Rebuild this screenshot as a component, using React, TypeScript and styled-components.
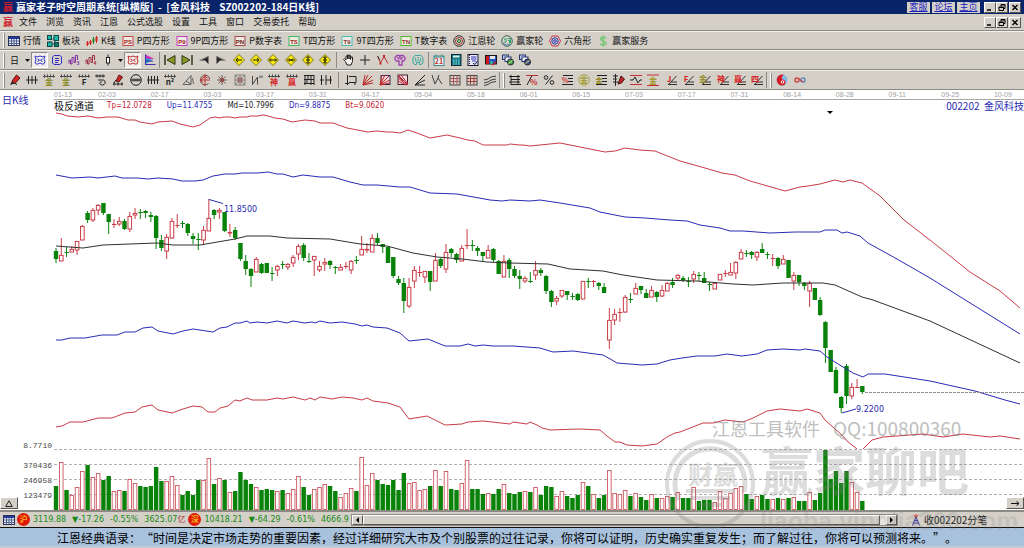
import React from "react";
import styled, { createGlobalStyle, css } from "styled-components";

const FACE = "#d4d0c8";
const GREEN = "#088208";
const RED = "#c83c46";
const BLUE = "#2a2ab4";
const CJK = '"Noto Sans CJK SC", sans-serif';

const GlobalStyle = createGlobalStyle`
  * { box-sizing: border-box; }
  body { margin: 0; background: #fff; font-family: ${CJK}; font-size: 9px; color: #111; }
  button { font: inherit; color: inherit; padding: 0; margin: 0; border: 0; background: none; }
  svg { display: block; }
`;

const Page = styled.div`
  display: flex;
  flex-direction: column;
  overflow: hidden;
`;

/* ---------- window chrome ---------- */

const TitleBar = styled.header`
  display: flex;
  align-items: center;
  height: 14px;
  padding: 0 3px 0 3px;
  gap: 2px;
  background: #0a246a;
  color: #fff;
  font-size: 10px;
  font-weight: 700;
  line-height: 14px;
  white-space: pre;
`;

const Brand = styled.span`
  color: #d01c2c;
  font-size: 10px;
  font-weight: 700;
  line-height: 14px;
  width: 11px;
`;

const TitleLinks = styled.nav`
  display: flex;
  gap: 2px;
  margin-left: auto;
  margin-right: 2px;
`;

const TitleLink = styled.a`
  width: 23px;
  height: 11px;
  background: ${FACE};
  color: #2020c0;
  font-size: 9px;
  font-weight: 400;
  line-height: 10px;
  text-align: center;
  text-decoration: underline;
`;

const WindowButtons = styled.div`
  display: flex;
`;

const raised = css`
  background: ${FACE};
  border: 1px solid;
  border-color: #fff #555 #555 #fff;
`;

const WindowButton = styled.button<{ $apart?: boolean }>`
  ${raised}
  display: grid;
  place-items: center;
  width: 12px;
  height: 11px;
  margin-left: ${(p) => (p.$apart ? 1 : 0)}px;
`;

const MenuBar = styled.nav`
  display: flex;
  align-items: center;
  gap: 9px;
  height: 17px;
  padding: 0 3px;
  background: ${FACE};
  border-bottom: 1px solid #8c8a84;
  line-height: 16px;
`;

const MenuItem = styled.button`
  line-height: 16px;
`;

const MenuBrand = styled(Brand)`
  margin-right: -4px;
`;

const MenuRight = styled.div`
  margin-left: auto;
`;

const Toolbar = styled.div<{ $h: number }>`
  display: flex;
  align-items: center;
  height: ${(p) => p.$h}px;
  background: ${FACE};
  border-top: 1px solid #f4f2ee;
  border-bottom: 1px solid #8c8a84;
`;

const Grip = styled.span`
  width: 2px;
  height: 15px;
  margin: 0 1px 0 3px;
  border-left: 1px solid #fff;
  border-right: 1px solid #8c8a84;
`;

const Separator = styled.span<{ $w: number }>`
  width: ${(p) => p.$w}px;
  height: 16px;
  background: linear-gradient(#8c8a84, #8c8a84) center / 1px 100% no-repeat;
`;

const LabelledTool = styled.button`
  display: flex;
  align-items: center;
  gap: 3px;
  margin: 0 4px 0 2px;
  line-height: 16px;
  white-space: nowrap;
`;

const ToolGroup = styled.div<{ $w: number }>`
  display: flex;
  justify-content: space-between;
  width: ${(p) => p.$w}px;
`;

const Tool = styled.button<{ $on?: boolean; $narrow?: boolean }>`
  display: grid;
  place-items: center;
  width: ${(p) => (p.$narrow ? 8 : 17)}px;
  height: 16px;
  ${(p) =>
    p.$on &&
    css`
      background: #f0eeea;
      border: 1px solid;
      border-color: #8c8a84 #fff #fff #8c8a84;
    `}
`;

/* ---------- chart ---------- */

const ChartHead = styled.div`
  display: grid;
  grid-template-columns: 54px 1fr;
  height: 20px;
`;

const PeriodLabel = styled.div`
  padding-left: 2px;
  color: ${BLUE};
  font-size: 10px;
  line-height: 19px;
`;

const Dates = styled.div`
  display: flex;
  height: 10px;
  border-bottom: 1px solid #a8a8a8;
  color: #a0a0a0;
  font-family: "Liberation Sans", sans-serif;
  font-size: 7px;
  line-height: 10px;
  span { flex: 1; }
  span:first-child { flex: 0 0 44px; }
  span:last-child { flex: 0 0 30px; }
`;

const Legend = styled.div`
  display: flex;
  gap: 15px;
  height: 10px;
  font-family: "DejaVu Sans Condensed", "DejaVu Sans", ${CJK};
  font-size: 8px;
  line-height: 12px;
  white-space: nowrap;
`;

const LegendItem = styled.span<{ $c: string }>`
  color: ${(p) => p.$c};
`;

const LegendName = styled.span`
  font-family: ${CJK};
  font-size: 10px;
  margin-right: -2px;
`;

const StockName = styled.span`
  margin-left: auto;
  color: ${BLUE};
  font-family: ${CJK};
  font-size: 10px;
  white-space: pre;
`;

const Plot = styled.main`
  position: relative;
`;

const PlotArea = styled.div`
  position: relative;
`;

const PlotSvg = styled.svg`
  width: 100%;
  height: auto;
`;

const Watermark = styled.svg`
  position: absolute;
  left: 0;
  top: 0;
  width: 100%;
  height: auto;
  pointer-events: none;
`;

const CornerButton = styled.button<{ $side: "left" | "right" }>`
  ${raised}
  position: absolute;
  bottom: 1px;
  ${(p) => p.$side}: 0;
  display: grid;
  place-items: center;
  width: 18px;
  height: 12px;
`;

/* ---------- status ---------- */

const StatusBar = styled.footer`
  display: flex;
  align-items: center;
  height: 17px;
  padding: 0 3px;
  background: ${FACE};
  border-top: 2px solid #8c8a84;
  color: #178a17;
  font-family: "DejaVu Sans", ${CJK};
  font-size: 8px;
  line-height: 14px;
  white-space: pre;
`;

const Market = styled.span`
  width: 13px;
  height: 13px;
  margin: 0 3px 0 2px;
  border-radius: 50%;
  background: #e01808;
  color: #ffe020;
  font-family: ${CJK};
  font-size: 8px;
  line-height: 12px;
  text-align: center;
`;

const Figures = styled.span`
  display: flex;
  gap: 6px;
`;

const Unit = styled.span`
  color: #b03030;
  margin-right: 1px;
`;

const ScrollTrack = styled.div`
  flex: 1;
  display: flex;
  height: 12px;
  margin: 0 0 0 2px;
  background: #e6e4de;
  border: 1px solid #8c8a84;
`;

const ScrollButton = styled.button`
  ${raised}
  display: grid;
  place-items: center;
  width: 11px;
`;

const ScrollThumb = styled.div`
  ${raised}
  flex: 1;
  margin-right: 6px;
`;

const TickPanel = styled.div`
  display: flex;
  align-items: center;
  gap: 2px;
  width: 123px;
  padding-left: 12px;
  color: #222;
  font-size: 10px;
  font-family: ${CJK};
`;

const Quote = styled.p`
  margin: 0;
  height: 21px;
  padding-left: 57px;
  background: #a8c2de;
  border-top: 1px solid #101010;
  border-bottom: 2px solid #c4ccd6;
  color: #000;
  font-size: 12px;
  line-height: 19px;
  white-space: nowrap;
  text-spacing-trim: space-all;
`;

/* ---------- data ---------- */

type Candle = ["g" | "r", number, number, number, number];

// colour, high, body top, body bottom, low
const candles: Candle[] = [
  ["g", 248, 251, 259, 263], ["r", 238, 255, 261, 261], ["g", 247, 252, 252, 257], ["r", 246, 249, 252, 252],
  ["r", 241, 241, 250, 255], ["r", 225, 226, 240, 240], ["g", 211, 213, 220, 223], ["r", 208, 210, 220, 222],
  ["r", 204, 205, 210, 215], ["g", 203, 203, 213, 215], ["g", 214, 214, 222, 234], ["r", 219, 224, 224, 228],
  ["r", 217, 221, 224, 226], ["g", 219, 221, 229, 230], ["r", 212, 216, 229, 232], ["r", 208, 213, 215, 219],
  ["g", 209, 212, 212, 219], ["g", 210, 211, 213, 218], ["g", 212, 215, 217, 222], ["g", 215, 216, 238, 249],
  ["g", 235, 240, 248, 251], ["r", 234, 237, 251, 259], ["r", 218, 221, 238, 239], ["r", 214, 225, 225, 228],
  ["g", 221, 223, 223, 228], ["g", 223, 224, 233, 236], ["g", 233, 236, 239, 244], ["g", 233, 239, 239, 250],
  ["r", 226, 230, 240, 245], ["r", 199, 218, 231, 231], ["g", 209, 210, 215, 219], ["r", 208, 210, 212, 219],
  ["g", 212, 212, 231, 232], ["r", 224, 232, 233, 237], ["g", 227, 230, 238, 240], ["g", 243, 243, 259, 261],
  ["g", 255, 261, 269, 275], ["g", 268, 269, 276, 287], ["r", 257, 259, 272, 272], ["g", 263, 264, 273, 274],
  ["g", 263, 263, 273, 273], ["g", 267, 273, 273, 281], ["r", 265, 266, 270, 276], ["g", 261, 264, 264, 269],
  ["r", 263, 264, 267, 270], ["r", 255, 257, 263, 267], ["r", 244, 246, 254, 260], ["g", 243, 245, 258, 261],
  ["g", 253, 261, 261, 263], ["r", 256, 256, 260, 276], ["r", 261, 266, 270, 272], ["r", 258, 262, 264, 271],
  ["g", 260, 261, 265, 269], ["g", 266, 267, 267, 274], ["r", 264, 267, 270, 270], ["r", 262, 266, 266, 269],
  ["r", 260, 261, 270, 274], ["g", 256, 260, 261, 264], ["r", 236, 249, 255, 255], ["r", 243, 249, 250, 253],
  ["r", 234, 238, 252, 252], ["g", 233, 238, 243, 245], ["g", 244, 244, 247, 253], ["g", 247, 247, 263, 263],
  ["g", 257, 257, 276, 278], ["g", 276, 279, 283, 285], ["g", 278, 283, 301, 313], ["r", 278, 287, 306, 308],
  ["r", 266, 270, 281, 288], ["r", 266, 272, 272, 277], ["r", 271, 271, 277, 283], ["g", 271, 271, 282, 291],
  ["r", 253, 260, 281, 281], ["g", 258, 259, 266, 268], ["r", 244, 252, 269, 273], ["g", 248, 249, 253, 257],
  ["g", 253, 254, 260, 263], ["r", 245, 248, 261, 261], ["r", 229, 245, 245, 249], ["g", 240, 245, 245, 251],
  ["g", 246, 248, 251, 256], ["g", 252, 252, 256, 262], ["r", 245, 250, 258, 258], ["g", 248, 249, 260, 262],
  ["g", 260, 261, 274, 274], ["r", 255, 261, 277, 277], ["g", 258, 260, 269, 278], ["g", 266, 269, 276, 278],
  ["g", 270, 276, 279, 289], ["r", 276, 278, 281, 283], ["g", 272, 281, 281, 283], ["r", 261, 270, 275, 280],
  ["g", 268, 270, 273, 276], ["g", 275, 276, 291, 294], ["g", 290, 291, 302, 307], ["r", 296, 298, 301, 305],
  ["r", 290, 290, 296, 298], ["g", 291, 291, 295, 300], ["g", 293, 296, 296, 300], ["g", 293, 294, 300, 301],
  ["r", 281, 281, 299, 299], ["g", 278, 281, 281, 288], ["r", 280, 281, 281, 287], ["g", 282, 283, 286, 290],
  ["g", 283, 287, 293, 293], ["r", 308, 320, 340, 349], ["r", 309, 314, 320, 325], ["r", 308, 312, 312, 322],
  ["r", 295, 297, 312, 313], ["g", 293, 299, 299, 303], ["r", 283, 288, 294, 294], ["g", 286, 286, 290, 294],
  ["g", 289, 293, 298, 298], ["r", 286, 290, 297, 297], ["g", 291, 292, 297, 302], ["r", 285, 290, 296, 297],
  ["r", 282, 283, 291, 291], ["g", 278, 282, 285, 288], ["r", 274, 275, 278, 280], ["g", 276, 278, 280, 282],
  ["g", 277, 281, 281, 287], ["r", 271, 274, 279, 283], ["g", 272, 275, 275, 281], ["g", 272, 278, 283, 283],
  ["g", 282, 284, 284, 291], ["r", 282, 283, 289, 289], ["r", 274, 274, 280, 280], ["r", 270, 273, 273, 277],
  ["r", 263, 272, 275, 275], ["r", 261, 262, 273, 279], ["r", 249, 252, 259, 259], ["g", 250, 253, 253, 257],
  ["g", 251, 252, 255, 259], ["r", 251, 252, 257, 261], ["g", 243, 249, 253, 253], ["g", 252, 254, 255, 259],
  ["r", 254, 258, 258, 266], ["g", 257, 258, 266, 269], ["r", 255, 259, 264, 264], ["g", 260, 260, 278, 278],
  ["r", 272, 275, 281, 290], ["g", 275, 275, 282, 286], ["g", 282, 283, 286, 290], ["r", 281, 283, 291, 307],
  ["g", 288, 288, 300, 300], ["g", 297, 300, 315, 316], ["g", 321, 322, 348, 363], ["g", 350, 350, 372, 372],
  ["g", 367, 370, 393, 394], ["g", 396, 397, 408, 413], ["g", 364, 366, 396, 404], ["r", 383, 387, 396, 399],
  ["r", 379, 387, 387, 388], ["g", 386, 386, 392, 394],
];

const volumes = [
  24, 48, 20, 15, 23, 39, 45, 33, 37, 30, 34, 19, 20, 19, 31, 27, 24, 23, 24, 43, 29, 29, 34, 25, 15, 19, 15, 30, 30,
  52, 26, 32, 30, 18, 19, 38, 30, 26, 23, 20, 21, 20, 19, 20, 17, 21, 34, 23, 15, 21, 23, 26, 24, 19, 13, 17, 22, 19,
  53, 25, 37, 30, 26, 25, 30, 20, 37, 27, 28, 20, 21, 24, 40, 24, 39, 21, 20, 27, 50, 21, 21, 16, 17, 16, 21, 26, 17,
  16, 18, 19, 18, 23, 15, 24, 23, 14, 19, 14, 12, 15, 28, 24, 16, 12, 15, 40, 17, 16, 20, 14, 17, 13, 10, 16, 12, 12,
  14, 13, 18, 12, 12, 23, 9, 10, 10, 8, 19, 12, 17, 22, 24, 16, 11, 14, 15, 11, 11, 12, 11, 12, 13, 9, 9, 18, 10, 17,
  60, 31, 39, 27, 39, 28, 18, 9,
];

const bands = [
  {
    color: RED,
    points:
      "56,113 62,114 67,116 78,117 88,116 98,118 107,117 118,117 128,120 135,120 140,122 152,124 158,122 172,121 180,124 193,127 200,125 210,118 215,117 220,118 223,117 230,117 235,118 240,117 247,117 250,116 258,116 263,115 268,116 275,118 283,119 292,122 305,120 315,121 320,123 333,123 347,128 368,132 377,131 387,132 392,132 400,133 408,130 417,133 430,138 447,135 460,138 468,140 475,141 483,145 507,145 510,144 520,145 523,145 530,146 540,145 560,143 585,148 605,152 615,151 625,148 640,150 655,151 680,161 705,168 722,173 735,175 750,181 785,191 800,187 808,186 820,184 835,180 843,182 850,180 862,183 880,196 904,220 930,240 970,272 1000,291 1020,308",
  },
  {
    color: BLUE,
    points:
      "56,175 72,178 90,177 98,178 115,176 122,178 137,178 148,179 158,178 173,179 182,181 195,181 203,180 213,176 225,174 235,174 242,173 258,173 268,172 277,174 283,174 293,177 303,175 320,177 333,177 350,182 363,185 377,185 400,187 410,187 430,193 457,194 490,200 502,201 510,200 530,201 540,200 560,203 590,208 600,212 625,217 645,218 670,220 687,221 700,225 720,228 730,231 743,231 770,233 795,232 820,232 825,230 837,230 842,233 847,232 860,236 868,243 897,259 930,278 1020,334",
  },
  {
    color: "#303030",
    points:
      "56,246 83,248 103,245 157,243 173,245 200,245 235,239 247,236 270,236 287,238 330,239 360,244 387,246 413,253 437,257 462,259 487,262 510,263 548,264 570,269 603,271 623,275 657,280 697,281 733,284 753,285 783,283 823,283 835,285 862,297 873,300 930,321 1020,363",
  },
  {
    color: BLUE,
    points:
      "56,340 62,340 70,338 85,338 102,335 117,335 125,332 135,332 143,328 152,327 158,331 173,334 183,331 193,329 213,332 220,328 227,327 235,323 240,323 247,321 250,323 257,322 267,323 277,321 287,323 293,321 305,323 312,322 315,323 320,321 330,323 342,322 355,324 362,326 367,325 373,327 387,328 400,333 409,341 428,339 445,346 460,346 468,344 475,346 483,345 493,346 513,346 540,348 553,352 573,351 603,355 612,360 617,363 642,365 657,364 670,360 682,358 697,356 715,356 727,354 742,356 757,354 767,350 783,349 800,350 805,349 820,351 827,357 843,367 853,373 863,377 868,374 885,374 930,381 975,391 1005,400 1020,404",
  },
  {
    color: RED,
    points:
      "56,427 62,426 70,422 83,422 98,418 112,418 125,413 135,412 142,407 152,405 158,410 172,413 183,409 193,406 202,407 208,412 215,412 220,408 228,406 235,400 240,401 247,398 252,400 267,400 277,398 283,399 293,397 305,400 310,398 315,400 320,397 332,399 342,397 353,398 362,400 367,398 373,401 388,403 400,407 409,419 427,416 445,425 462,424 468,422 483,421 510,424 513,422 527,424 530,422 537,425 542,428 550,430 580,429 600,430 607,436 615,442 620,442 627,445 642,446 657,444 667,437 675,433 680,432 703,423 713,423 725,420 743,422 753,418 767,411 780,409 800,411 807,409 820,413 825,420 843,436 847,441 857,449",
  },
  { color: RED, points: "863,449 872,440 883,437 923,434 943,437 963,434 990,437 1000,436 1020,439" },
];

const dates =
  "01-13 02-03 02-17 03-03 03-17 03-31 04-17 05-04 05-18 06-01 06-15 07-03 07-17 07-31 08-14 08-28 09-11 09-25 10-09".split(
    " "
  );

/* ---------- icons ---------- */

const Glyph = ({ children, w = 12 }: { children: React.ReactNode; w?: number }) => (
  <svg width={w} height={12} viewBox={`0 0 ${w} 12`} fill="none" stroke="#222" strokeWidth="1" overflow="visible" aria-hidden="true">
    {children}
  </svg>
);

const Char = ({ x = 6, y = 11, s = 8, c = "#222", children }: any) => (
  <text x={x} y={y} fontSize={s} fill={c} stroke="none" textAnchor="middle" fontFamily={CJK} fontWeight="700">
    {children}
  </text>
);

const tableIcon = (
  <Glyph>
    <rect x="0.5" y="1.5" width="11" height="9" fill="#e8eef8" stroke="#283058" />
    <path d="M1 3h10" stroke="#2038a0" strokeWidth="2" />
    <path d="M1 6h10M1 8.5h10M3.5 4v6M6 4v6M8.500 4v6" stroke="#50608c" />
  </Glyph>
);

const blocksIcon = (
  <Glyph>
    <path d="M5.500 4h2M3 6v3M8 6v2M5 9h2" stroke="#084848" />
    <rect x="0.5" y="0.5" width="4" height="4" fill="#20b8a8" stroke="#084848" />
    <rect x="7" y="0.5" width="4.500" height="5" fill="#20b8a8" stroke="#084848" />
    <rect x="0.5" y="7" width="4.500" height="4.500" fill="#20b8a8" stroke="#084848" />
    <rect x="7.500" y="7.500" width="4" height="4" fill="#107868" stroke="#084848" />
  </Glyph>
);

const kIcon = (
  <Glyph>
    <path d="M1.500 6v5M4.500 5v5M10.500 1v7" stroke="#d82020" />
    <path d="M7.500 2v7" stroke="#188018" />
    <path d="M1.500 7v3M4.500 6v3M10.500 2v4" stroke="#d82020" strokeWidth="2" />
    <path d="M7.500 4v3" stroke="#188018" strokeWidth="2" />
  </Glyph>
);

const tagIcon = (label: string, frame: string, ink = "#a02020") => (
  <Glyph>
    <rect x="1" y="1.500" width="10" height="9" stroke={frame} fill="#f0ece4" />
    <text x="6" y="8.500" fontSize="6" fontWeight="700" fill={ink} stroke="none" textAnchor="middle" fontFamily="Liberation Sans">
      {label}
    </text>
  </Glyph>
);

const wheelIcon = (
  <Glyph>
    <circle cx="6" cy="6" r="5.300" stroke="#303030" />
    <circle cx="6" cy="6" r="3.500" stroke="#a02828" />
    <circle cx="6" cy="6" r="1.500" stroke="#186018" />
  </Glyph>
);

const winWheelIcon = (
  <Glyph>
    <circle cx="6" cy="6" r="5.300" stroke="#406858" />
    <path d="M3 4h2v3H3M6.500 3.500h3v4.500M7 5.500h1.500v3" stroke="#30a070" />
    <path d="M2 8c2 2 5 2.500 7 1" stroke="#4878b0" />
  </Glyph>
);

const hexIcon = (
  <Glyph>
    <path d="M3.200 1h5.600l2.700 5-2.700 5H3.200L.5 6z" stroke="#d03040" />
    <circle cx="6" cy="6" r="3.200" stroke="#2838b8" />
    <circle cx="6" cy="6" r="1.300" stroke="#2838b8" />
  </Glyph>
);

const dollarIcon = (
  <Glyph>
    <path d="M9 3.500C8 1.500 3.500 1.800 3.500 4S9 6 9 8.300 4 10.500 3 8.500M6.200 .5v11" stroke="#78c878" strokeWidth="1.600" />
  </Glyph>
);

const cloud = (c: string) => (
  <Glyph>
    <path d="M1 2l2 1 3-1 3 1 2-1-1 3 1 2-1 3H8L6 9l-2 1H2L1 8l1-2zM3.500 5l2 1-2 2M8.500 5l-2 1 2 2" stroke={c} />
  </Glyph>
);

const clipboard = (
  <Glyph>
    <path d="M3 1.500h6l1.500 1.500v6L9 10.500H3L1.500 9V3zM4 4.500h4M4 6.500h4M4 8.500h3" stroke="#3030c8" />
  </Glyph>
);

const zigzag = (c: string, n: string) => (
  <Glyph>
    <path d="M1 9.500V6h1.500v4H4V3.500h2v5h1.500V1.500h2V6" stroke={c} />
    <Char x={10} y={11} s={5} c={c}>{n}</Char>
  </Glyph>
);

const candleIcon = (
  <Glyph>
    <path d="M6 .5v3M6 9v2.500" />
    <rect x="4.500" y="3.500" width="3" height="5.500" fill="#fff" />
  </Glyph>
);

const flagIcon = (
  <Glyph>
    <path d="M1.500 .5l9 4.500h-9z" fill="#d030c0" stroke="none" />
    <path d="M1.500 4l7 2-7 4z" fill="#20a0c8" stroke="none" />
    <path d="M1.500 .5v10.500M1 10.500h10.500M2 7h7" stroke="#4030b0" />
  </Glyph>
);

const skip = (dir: "left" | "right") => (
  <Glyph>
    <g transform={dir === "right" ? "matrix(-1 0 0 1 12 0)" : undefined}>
      <path d="M1 1v10" stroke="#303818" strokeWidth="1.500" />
      <path d="M11 1.500v9L3 6z" fill="#889820" stroke="#303818" />
    </g>
  </Glyph>
);

const step = (dir: "left" | "right") => (
  <Glyph>
    <g transform={dir === "right" ? "matrix(-1 0 0 1 12 0)" : undefined}>
      <path d="M10.500 2v8L7 6.500H1z" fill="#282828" stroke="none" />
      <path d="M10 2.500L2 6.500" stroke="#909090" />
    </g>
  </Glyph>
);

const diamond = (arrow: string) => (
  <Glyph>
    <path d="M6 .5L11.500 6 6 11.500.5 6z" fill="#f8e818" stroke="#807810" />
    <path d={arrow} stroke="#181800" />
  </Glyph>
);

const handIcon = (
  <Glyph>
    <path d="M3.500 7.500L1.500 5.500l1-1 1.500 1.500V2h1.500v3V1H7v4V1.500h1.500V5.500L9 3h1.500v4.500L9 11H5z" fill="#f4f2ee" />
  </Glyph>
);

const plusIcon = <Glyph><path d="M6 1v10M1 6h10" /></Glyph>;

const waveIcon = (
  <Glyph>
    <path d="M1 2.500l2.500 6.500L7 2.500l4 7" stroke="#c02828" />
    <path d="M2.500 8.500h2v2h-2zM6 1h2v2H6z" fill="#c02828" stroke="none" />
    <path d="M.5 2l2 4" stroke="#303030" />
  </Glyph>
);

const brain = (c: string) => (
  <Glyph>
    <path d="M3 1.500h2l1 1 1-1h2l2 2v2L9.500 7H8v4H5V7H2.500L1 5.500v-2zM3 4h2v1.500M9 4H7v2" stroke={c} strokeWidth="1.300" />
  </Glyph>
);

const brainAlt = (
  <Glyph>
    <path d="M3 1.500h6L11 4v5l-2 1.500H7.500V8.500h-3v2H2.500L1 9V4zM3.500 4v2M6 3v4M8.500 4v2M3 7h2M7 7h2.500" stroke="#38a8a0" />
  </Glyph>
);

const calendarIcon = (
  <Glyph>
    <rect x="1" y="2" width="10" height="9.500" fill="#e8f4f4" stroke="#408888" />
    <path d="M1 3h10M3 .5v2M9 .5v2" stroke="#408888" />
    <Char s={7} y={10} c="#d03030">21</Char>
  </Glyph>
);

const calculatorIcon = (
  <Glyph>
    <rect x="1.500" y="0.500" width="9.500" height="11" fill="#107888" stroke="#102838" />
    <path d="M3 2.500h6.500" stroke="#d8f0e0" strokeWidth="2" />
    <path d="M3 6h7M3 8h7M3 10h7" stroke="#90e0e0" strokeDasharray="1.500 1" />
  </Glyph>
);

const noteIcon = (
  <Glyph>
    <rect x="1" y="0.500" width="10" height="11" fill="#e8e8ff" stroke="#181838" />
    <path d="M2.500 1v10" strokeDasharray="1 1" />
    <path d="M4 3h5.500M4 5h5.500M5 7h4" stroke="#3838b0" />
    <path d="M6 9l2 1.500L10.500 7" stroke="#181838" />
  </Glyph>
);

const diskIcon = (
  <Glyph>
    <rect x="0.500" y="1.500" width="11" height="8.500" fill="#2850c0" stroke="#181818" />
    <path d="M1 2h3v8H1z" fill="#d01820" stroke="none" />
    <path d="M5 2h5v3H5z" fill="#e8e8e8" stroke="none" />
    <path d="M5 7h3v3H5z" fill="#20a8a0" stroke="none" />
    <path d="M7 11l4-3" stroke="#d01820" strokeWidth="1.500" />
  </Glyph>
);

const globeIcon = (lens: string) => (
  <Glyph>
    <rect x="0.500" y="1" width="6" height="4.500" fill="#b8c8f0" stroke="#283868" />
    <rect x="3" y="3" width="6" height="4.500" fill="#f0f0f8" stroke="#283868" />
    <circle cx="8.500" cy="8" r="3" fill={lens} stroke="#202020" />
    <path d="M6.500 9.500l4-3" stroke="#e8e840" />
  </Glyph>
);

const penIcon = (
  <Glyph>
    <path d="M1 11l2-4 2.500 2.500z" fill="#202020" stroke="none" />
    <path d="M3 7l4.500-6L11 4 6 9.500z" fill="#d02828" stroke="#601010" />
    <path d="M5 9l3 1.500" />
  </Glyph>
);
const ticksIcon = <Glyph><path d="M0 6h12M2.500 2v8M6 2v8M9.500 2v8" /></Glyph>;
const labelTicks = (t: string, c = "#222") => (
  <Glyph>
    <path d="M0 2.500h12M1.500 .5v3M4.500 .5v3M7.500 .5v3M10.500 .5v3" stroke="#484848" />
    <Char s={8} y={11} c={c}>{t}</Char>
  </Glyph>
);
const spiralTicks = (
  <Glyph>
    <path d="M0 2h10M2 .5v3M5 .5v3M8 .5v3M3 6h5c3 0 3 5-.500 5S4 7.500 7 8" />
  </Glyph>
);
const penTicks = (
  <Glyph>
    <path d="M4 7L7 1l3.500 2L7 8z" fill="#d02828" stroke="#601010" />
    <path d="M1 10h10M2 8.500v3M6 8.500v3M10 8.500v3M2 9l2-3" />
  </Glyph>
);
const circleTicks = (
  <Glyph>
    <circle cx="6" cy="6" r="5.300" />
    <path d="M1 6h10M3 4.500v3M5 4.500v3M7 4.500v3M9 4.500v3" />
  </Glyph>
);
const fourTicks = <Glyph><path d="M0 6h12M1.500 2v8M4.500 2v8M7.500 2v8M10.500 2v8" /></Glyph>;
const compassIcon = <Glyph><path d="M1 10.500L9 1.500v9zM4 7l5 3M10.500 4l1 6" stroke="#606060" /></Glyph>;
const targetIcon = (
  <Glyph>
    <path d="M9.500 9.500A4.800 4.800 0 1 1 10.800 5" stroke="#704040" />
    <path d="M6 0v12M1 6h10" stroke="#c03030" />
    <path d="M3.500 8.500A3 3 0 0 1 8.500 4" stroke="#c03030" />
  </Glyph>
);
const starIcon = (
  <Glyph>
    <path d="M6 1v10M1 6h10M2.500 2.500l7 7M9.500 2.500l-7 7" stroke="#606060" />
    <circle cx="6" cy="6" r="2" stroke="#b83838" />
  </Glyph>
);
const boxStarIcon = (
  <Glyph>
    <path d="M1 1h10v10H1zM1 1l10 10M11 1L1 11M6 1v10M1 6h10" stroke="#707070" strokeWidth="0.800" />
    <path d="M4 4h4v4H4z" stroke="#a85050" />
  </Glyph>
);
const quoteLines = <Glyph><path d="M1.500 2v8.500L6.500 3v7.500M9 1.500v2.500M11 1.500v2.500" stroke="#484848" /></Glyph>;
const comb = <Glyph><path d="M1 1.500h10M1 5.500h10M1 9.500h10M2 1v10M5 1v4M8 1v10M11 1v10M4 6v4" /></Glyph>;
const hBars = <Glyph><path d="M1.500 1v10M6 1v10M10.500 2v8M0 6h4M6 6h6" /></Glyph>;
const squareMark = <Glyph><path d="M2.500 1v10M0 9.500h4M4 2.500h7v6H4M4 8.500h7M10 9v2" /></Glyph>;
const fan = (boxed: boolean) => (
  <Glyph>
    {boxed && <rect x="2" y="1.500" width="9" height="9" fill="#f0d8e0" stroke="#303058" />}
    <path d="M1 11L3 1M1 11L6 1M1 11l9-9M1 11l10-5M1 11l10-2" stroke="#c02828" />
  </Glyph>
);
const fanDown = (
  <Glyph>
    <rect x="1" y="1" width="9.500" height="9.500" fill="#f4dce0" stroke="#402030" />
    <path d="M1 1l10 10M1 4l9 7M1 7l8 4M4 1l7 9M1 2l5 5" stroke="#b82838" />
  </Glyph>
);
const anglesIcon = <Glyph><path d="M1 11L11 1M1 11l10-5M1 11h10" /></Glyph>;
const vIcon = <Glyph><path d="M1 1l3 9 3-6 4 6M7 4l1-3" stroke="#404040" /></Glyph>;
const gridIcon = (c: string) => (
  <Glyph>
    <rect x="1" y="1.500" width="10" height="9.500" stroke="#484848" />
    <path d="M1 4.500h10M1 7.500h10M4.500 1.500v9M8 1.500v9" stroke={c} />
  </Glyph>
);
const slopes = <Glyph><path d="M0 6l4-1 3-2 5-1M0 9l4-1 3-2 5-1M0 11.500l4-1 3-2 5-1" stroke="#404040" /></Glyph>;
const rungs = <Glyph><path d="M2 1v10M9 1v10M0 2.500h11M2 5.500h9M0 8h11M2 10.500h10" /></Glyph>;
const pctLines = (
  <Glyph>
    <path d="M0 1.500h12" stroke="#c83030" />
    <path d="M1 11L6 1.500" />
    <Char x={7.500} s={8} c="#c83030">%</Char>
  </Glyph>
);
const pct = (
  <Glyph>
    <path d="M2.500 10.500l7-9" />
    <circle cx="3" cy="3.500" r="1.800" />
    <circle cx="9" cy="8.500" r="1.800" />
  </Glyph>
);
const listMark = (t: string, c: string) => (
  <Glyph>
    <path d="M2 1.500h10M7 4.500h5M7 7.500h5M1 10.500h11" />
    <Char x={4} y={9} s={7} c={c}>{t}</Char>
  </Glyph>
);
const goldCircle = (
  <Glyph>
    <circle cx="6" cy="6" r="5.300" stroke="#a8a040" />
    <Char y={9} s={8} c="#a09828">金</Char>
  </Glyph>
);
const rulerPen = (
  <Glyph>
    <path d="M2.500 0v12M0 2h5M0 5h4M0 8h5" />
    <path d="M5 10l3-8 3.500 3-3 4z" fill="#c02828" stroke="#401010" />
  </Glyph>
);
const waveLines = (
  <Glyph>
    <path d="M0 1.500h12M0 10.500h12" stroke="#c83030" />
    <path d="M0 6h3l2-3 3 6 2-3h2" />
  </Glyph>
);
const goldLines = (
  <Glyph>
    <path d="M0 1h12M0 11.500h12" stroke="#c83030" />
    <Char y={9.500} s={8} c="#a09020">金</Char>
  </Glyph>
);
const slopeMark = (t: string, c: string) => (
  <Glyph>
    <path d="M3 11L11.500 2M6 8h6M3 10.500h9" stroke="#303030" />
    <Char x={4} y={8} s={8} c={c}>{t}</Char>
  </Glyph>
);
const taijiIcon = (
  <Glyph>
    <circle cx="6" cy="6" r="5.500" fill="#88b8e8" stroke="none" />
    <path d="M8 .8A5.500 5.500 0 1 0 6 11.500c4.500 0 4.500-5.500 1-6C5 5 5.500 2 8 .8z" fill="#d81820" stroke="none" />
    <circle cx="6.500" cy="8" r="1.300" fill="#d81820" stroke="#fff" />
  </Glyph>
);
const infinityIcon = (
  <Glyph>
    <path d="M6 6C4 3.500 1 3 1 6s3 2.500 5 0" stroke="#d04848" strokeWidth="1.500" />
    <path d="M6 6c2-2.500 5-3 5 0s-3 2.500-5 0" stroke="#6088c0" strokeWidth="1.500" />
    <path d="M4 4l5 4" stroke="#d04848" strokeWidth="1.500" />
  </Glyph>
);

const DropArrow = () => (
  <svg width="5" height="3" viewBox="0 0 5 3" aria-hidden="true">
    <path d="M0 0h5L2.500 3z" fill="#111" />
  </svg>
);

const menuItems = ["文件", "浏览", "资讯", "江恩", "公式选股", "设置", "工具", "窗口", "交易委托", "帮助"];

const labelled: [React.ReactNode, string][] = [
  [tableIcon, "行情"],
  [blocksIcon, "板块"],
  [kIcon, "K线"],
  [tagIcon("PS", "#c84848"), "P四方形"],
  [tagIcon("P9", "#c040c0"), "9P四方形"],
  [tagIcon("PN", "#a04848", "#701818"), "P数字表"],
  [tagIcon("TS", "#40b860"), "T四方形"],
  [tagIcon("T9", "#48c0b0", "#803030"), "9T四方形"],
  [tagIcon("TN", "#50b830", "#903028"), "T数字表"],
  [wheelIcon, "江恩轮"],
  [winWheelIcon, "赢家轮"],
  [hexIcon, "六角形"],
  [dollarIcon, "赢家服务"],
];

const navTools = [
  skip("left"), skip("right"), step("left"), step("right"),
  diamond("M3 6h6M5 4L3 6l2 2"),
  diamond("M3 6h6M7 4l2 2-2 2"),
  diamond("M2.500 6h7M4 4.500L2.500 6 4 7.500M8 4.500L9.500 6 8 7.500"),
  diamond("M2 6h8M4 4.500L5.500 6 4 7.500M8 4.500L6.500 6 8 7.500"),
  diamond("M6 2.500v7M4 6h4M4.500 4L6 2.500 7.500 4M4.500 8L6 9.500 7.500 8"),
  diamond("M6 2v8M4 6h4M4.500 3L6 4.500 7.500 3M4.500 9L6 7.500 7.500 9"),
];

const drawTools = [
  penIcon, ticksIcon, labelTicks("金", "#88881c"), labelTicks("金", "#88881c"), labelTicks("F"), spiralTicks,
  penTicks, circleTicks, fourTicks, labelTicks("n²"), compassIcon, targetIcon, starIcon, boxStarIcon, quoteLines,
  labelTicks("神", "#d82020"), labelTicks("赢", "#d82020"), comb, hBars,
];

const fanTools = [
  squareMark, fan(false), fan(true), fanDown, anglesIcon, vIcon, gridIcon("#a85858"), gridIcon("#a04040"), slopes,
];

const levelTools = [
  rungs, pctLines, pct, listMark("%", "#c83030"), goldCircle, listMark("金", "#908818"), rulerPen, waveLines,
  goldLines, slopeMark("J", "#d82020"), slopeMark("F", "#d82020"), slopeMark("金", "#908818"),
  slopeMark("神", "#d82020"), slopeMark("赢", "#d82020"), slopeMark("四", "#d82020"),
];

const Tools = ({ w, icons, name }: { w: number; icons: React.ReactNode[]; name: string }) => (
  <ToolGroup $w={w} role="group" aria-label={name}>
    {icons.map((icon, i) => (
      <Tool key={i} aria-label={`${name} ${i + 1}`}>{icon}</Tool>
    ))}
  </ToolGroup>
);

const WindowControls = () => (
  <WindowButtons>
    <WindowButton aria-label="最小化">
      <svg width="8" height="7" viewBox="0 0 8 7"><path d="M1 6h4" stroke="#000" strokeWidth="1.500" /></svg>
    </WindowButton>
    <WindowButton aria-label="还原">
      <svg width="8" height="7" viewBox="0 0 8 7" fill="none" stroke="#000">
        <path d="M3 2.500V.5h4v4H5.500M3 1h4M1 3h4.500v3.500H1zM1 3.500h4" />
      </svg>
    </WindowButton>
    <WindowButton $apart aria-label="关闭">
      <svg width="8" height="7" viewBox="0 0 8 7"><path d="M1.500 1l5 5M6.500 1l-5 5" stroke="#000" strokeWidth="1.400" /></svg>
    </WindowButton>
  </WindowButtons>
);

/* ---------- chart drawing ---------- */

const FIRST_X = 56;
const STEP = 5.27;
const BASE = 510;

const CandleMark = ({ i, c }: { i: number; c: Candle }) => {
  const [kind, high, top, bottom, low] = c;
  const x = FIRST_X + i * STEP;
  const color = kind === "g" ? GREEN : RED;
  if (top === bottom) return <path d={`M${x} ${high}V${low}M${x - 2} ${top + 0.5}h4.500`} stroke={color} />;
  return (
    <g stroke={color}>
      <path d={`M${x} ${high}V${top}M${x} ${bottom}V${low}`} />
      {kind === "g" ? (
        <rect x={x - 2.2} y={top} width="4.400" height={bottom - top} fill={color} stroke="none" />
      ) : (
        <rect x={x - 1.8} y={top + 0.4} width="3.600" height={bottom - top - 0.4} fill="#fff" />
      )}
    </g>
  );
};

const VolumeBar = ({ i, h, kind }: { i: number; h: number; kind: "g" | "r" }) => {
  const x = FIRST_X + i * STEP;
  return kind === "g" ? (
    <rect x={x - 2.2} y={BASE - h} width="4.400" height={h} fill={GREEN} />
  ) : (
    <rect x={x - 1.8} y={BASE - h + 0.5} width="3.600" height={h - 1} fill="#fff" stroke="#cc5860" strokeWidth="0.900" />
  );
};

const levels = [
  { y: 449.5, label: "8.7710", labelY: 448 },
  { y: 464.5, label: "370436", labelY: 468 },
  { y: 479.5, label: "246958", labelY: 483 },
  { y: 494.5, label: "123479", labelY: 498 },
];

const Chart = () => (
  <PlotSvg viewBox="0 110 1024 400" fill="none" role="img" aria-label="日K线">
    {levels.map((l) => (
      <g key={l.label}>
        <path d={`M54 ${l.y}H1024`} stroke="#b0b0b0" strokeDasharray="3 2" />
        <text x="52" y={l.labelY} textAnchor="end" fontSize="8" fill="#484848" fontFamily="Liberation Mono">{l.label}</text>
      </g>
    ))}
    {volumes.map((h, i) => <VolumeBar key={i} i={i} h={h} kind={candles[i][0]} />)}
    {candles.map((c, i) => <CandleMark key={i} i={i} c={c} />)}
    {bands.map((b, i) => <polyline key={i} points={b.points} stroke={b.color} />)}
    <path d="M865 392.500H1024" stroke="#909090" strokeDasharray="3 1" />
    <path d="M827 111h6l-3 3z" fill="#000" />
    <path d="M209 199.500l14 4M842 413l14-4" stroke={BLUE} />
    <g fill={BLUE} fontSize="8" fontFamily="DejaVu Sans">
      <text x="224" y="212">11.8500</text>
      <text x="856" y="412">9.2200</text>
    </g>
  </PlotSvg>
);

const WatermarkArt = () => (
  <Watermark viewBox="0 110 1024 430" fill="none" aria-hidden="true">
    <g fill="#808080" fontFamily={CJK}>
      <g opacity="0.500">
        <text x="712" y="436" fontSize="18">江恩工具软件</text>
        <text x="833" y="436" fontSize="19">QQ:100800360</text>
      </g>
      <g opacity="0.270">
        <text x="761" y="491" fontSize="52" fontWeight="700">赢家聊吧</text>
        <text x="688" y="484" fontSize="25" fontWeight="700">财赢</text>
      </g>
      <text x="760" y="530" fontSize="25" fontWeight="700" fontFamily="Liberation Sans" opacity="0.180">
        liaoba.yingjia360.com
      </text>
    </g>
    <g stroke="#808080" opacity="0.270">
      <circle cx="710" cy="484" r="43" strokeWidth="4" />
      <path d="M679 500A35 35 0 1 1 744 492" strokeWidth="5" />
      <path d="M686 491h48M690 498h40M698 505h24" strokeWidth="4" />
    </g>
  </Watermark>
);

export default function App() {
  return (
    <Page lang="zh-CN">
      <GlobalStyle />
      <TitleBar>
        <Brand>赢</Brand>
        <span>{"赢家老子时空周期系统[纵横版]  -  [金风科技    SZ002202-184日K线]"}</span>
        <TitleLinks>
          <TitleLink href="#service">客服</TitleLink>
          <TitleLink href="#forum">论坛</TitleLink>
          <TitleLink href="#home">主页</TitleLink>
        </TitleLinks>
        <WindowControls />
      </TitleBar>
      <MenuBar>
        <MenuBrand>赢</MenuBrand>
        {menuItems.map((m) => <MenuItem key={m}>{m}</MenuItem>)}
        <MenuRight><WindowControls /></MenuRight>
      </MenuBar>
      <Toolbar $h={19} role="toolbar">
        <Grip />
        {labelled.map(([icon, text]) => (
          <LabelledTool key={text}>{icon}{text}</LabelledTool>
        ))}
      </Toolbar>
      <Toolbar $h={20} role="toolbar">
        <Grip />
        <Tool>日</Tool>
        <Tool $narrow aria-label="周期"><DropArrow /></Tool>
        <Tool $on aria-label="形态">{cloud("#3838c8")}</Tool>
        <Tool aria-label="列表">{clipboard}</Tool>
        <Tool aria-label="三段">{zigzag("#8030a0", "3")}</Tool>
        <Tool aria-label="四段">{zigzag("#a03048", "4")}</Tool>
        <Tool aria-label="K线样式">{candleIcon}</Tool>
        <Tool $narrow aria-label="样式"><DropArrow /></Tool>
        <Tool $on aria-label="反转">{cloud("#c03030")}</Tool>
        <Tool aria-label="标旗">{flagIcon}</Tool>
        <Separator $w={3} />
        <Tools w={173} icons={navTools} name="移动" />
        <Separator $w={5} />
        <Tools w={87} icons={[handIcon, plusIcon, waveIcon, brain("#a040b0"), brainAlt]} name="光标" />
        <Separator $w={4} />
        <Tools
          w={104}
          icons={[calendarIcon, calculatorIcon, noteIcon, diskIcon, globeIcon("#40a070"), globeIcon("#4050a0")]}
          name="工具"
        />
      </Toolbar>
      <Toolbar $h={20} role="toolbar">
        <Grip />
        <Tools w={329} icons={drawTools} name="画线" />
        <Separator $w={7} />
        <Tools w={156} icons={fanTools} name="角度" />
        <Separator $w={2} />
        <Grip />
        <Tools w={260} icons={levelTools} name="水平" />
        <Separator $w={1} />
        <Grip />
        <Tools w={35} icons={[taijiIcon, infinityIcon]} name="周天" />
      </Toolbar>
      <ChartHead>
        <PeriodLabel>日K线</PeriodLabel>
        <div>
          <Dates>{dates.map((d) => <span key={d}>{d}</span>)}</Dates>
          <Legend>
            <LegendName>极反通道</LegendName>
            <LegendItem $c="#c82030">Tp=12.0728</LegendItem>
            <LegendItem $c={BLUE}>Up=11.4755</LegendItem>
            <LegendItem $c="#222">Md=10.7996</LegendItem>
            <LegendItem $c={BLUE}>Dn=9.8875</LegendItem>
            <LegendItem $c="#c82030">Bt=9.0620</LegendItem>
            <StockName>{"002202  金风科技"}</StockName>
          </Legend>
        </div>
      </ChartHead>
      <Plot>
        <PlotArea id="plot">
          <Chart />
          <CornerButton $side="left" aria-label="展开">
            <svg width="8" height="7" viewBox="0 0 8 7"><path d="M4 .8L7.300 6.500H.7z" fill="none" stroke="#222" /></svg>
          </CornerButton>
          <CornerButton $side="right" aria-label="向右">
            <svg width="10" height="7" viewBox="0 0 10 7"><path d="M1 3.500h8M6.500 1.500l2.500 2-2.500 2" fill="none" stroke="#111" /></svg>
          </CornerButton>
        </PlotArea>
        <StatusBar>
          {tableIcon}
          <Market>沪</Market>
          <Figures>
            <span>3119.88</span>
            <span>▼-17.26</span>
            <span>-0.55%</span>
            <span>3625.07</span>
          </Figures>
          <Unit>亿</Unit>
          <Market>深</Market>
          <Figures>
            <span>10418.21</span>
            <span>▼-64.29</span>
            <span>-0.61%</span>
            <span>4666.9</span>
          </Figures>
          <ScrollTrack role="scrollbar" aria-label="时间轴" aria-controls="plot" aria-valuenow={0}>
            <ScrollButton aria-label="向前">
              <svg width="4" height="6" viewBox="0 0 4 6"><path d="M4 0v6L1 3z" fill="#000" /></svg>
            </ScrollButton>
            <ScrollThumb />
            <ScrollButton aria-label="向后">
              <svg width="4" height="6" viewBox="0 0 4 6"><path d="M0 0v6l3-3z" fill="#000" /></svg>
            </ScrollButton>
          </ScrollTrack>
          <TickPanel>
            <Glyph>
              <path d="M6 3L2.500 11.500M6 3l3.500 8.500M4.500 6.500h3M3.500 9h5" stroke="#3838a0" />
              <path d="M3.500 1l2.500 2 2.500-2M6 0v3" stroke="#d03838" />
            </Glyph>
            收002202分笔
          </TickPanel>
        </StatusBar>
        <WatermarkArt />
      </Plot>
      <Quote>
        江恩经典语录：“时间是决定市场走势的重要因素，经过详细研究大市及个别股票的过往记录，你将可以证明，历史确实重复发生；而了解过往，你将可以预测将来。”。
      </Quote>
    </Page>
  );
}
